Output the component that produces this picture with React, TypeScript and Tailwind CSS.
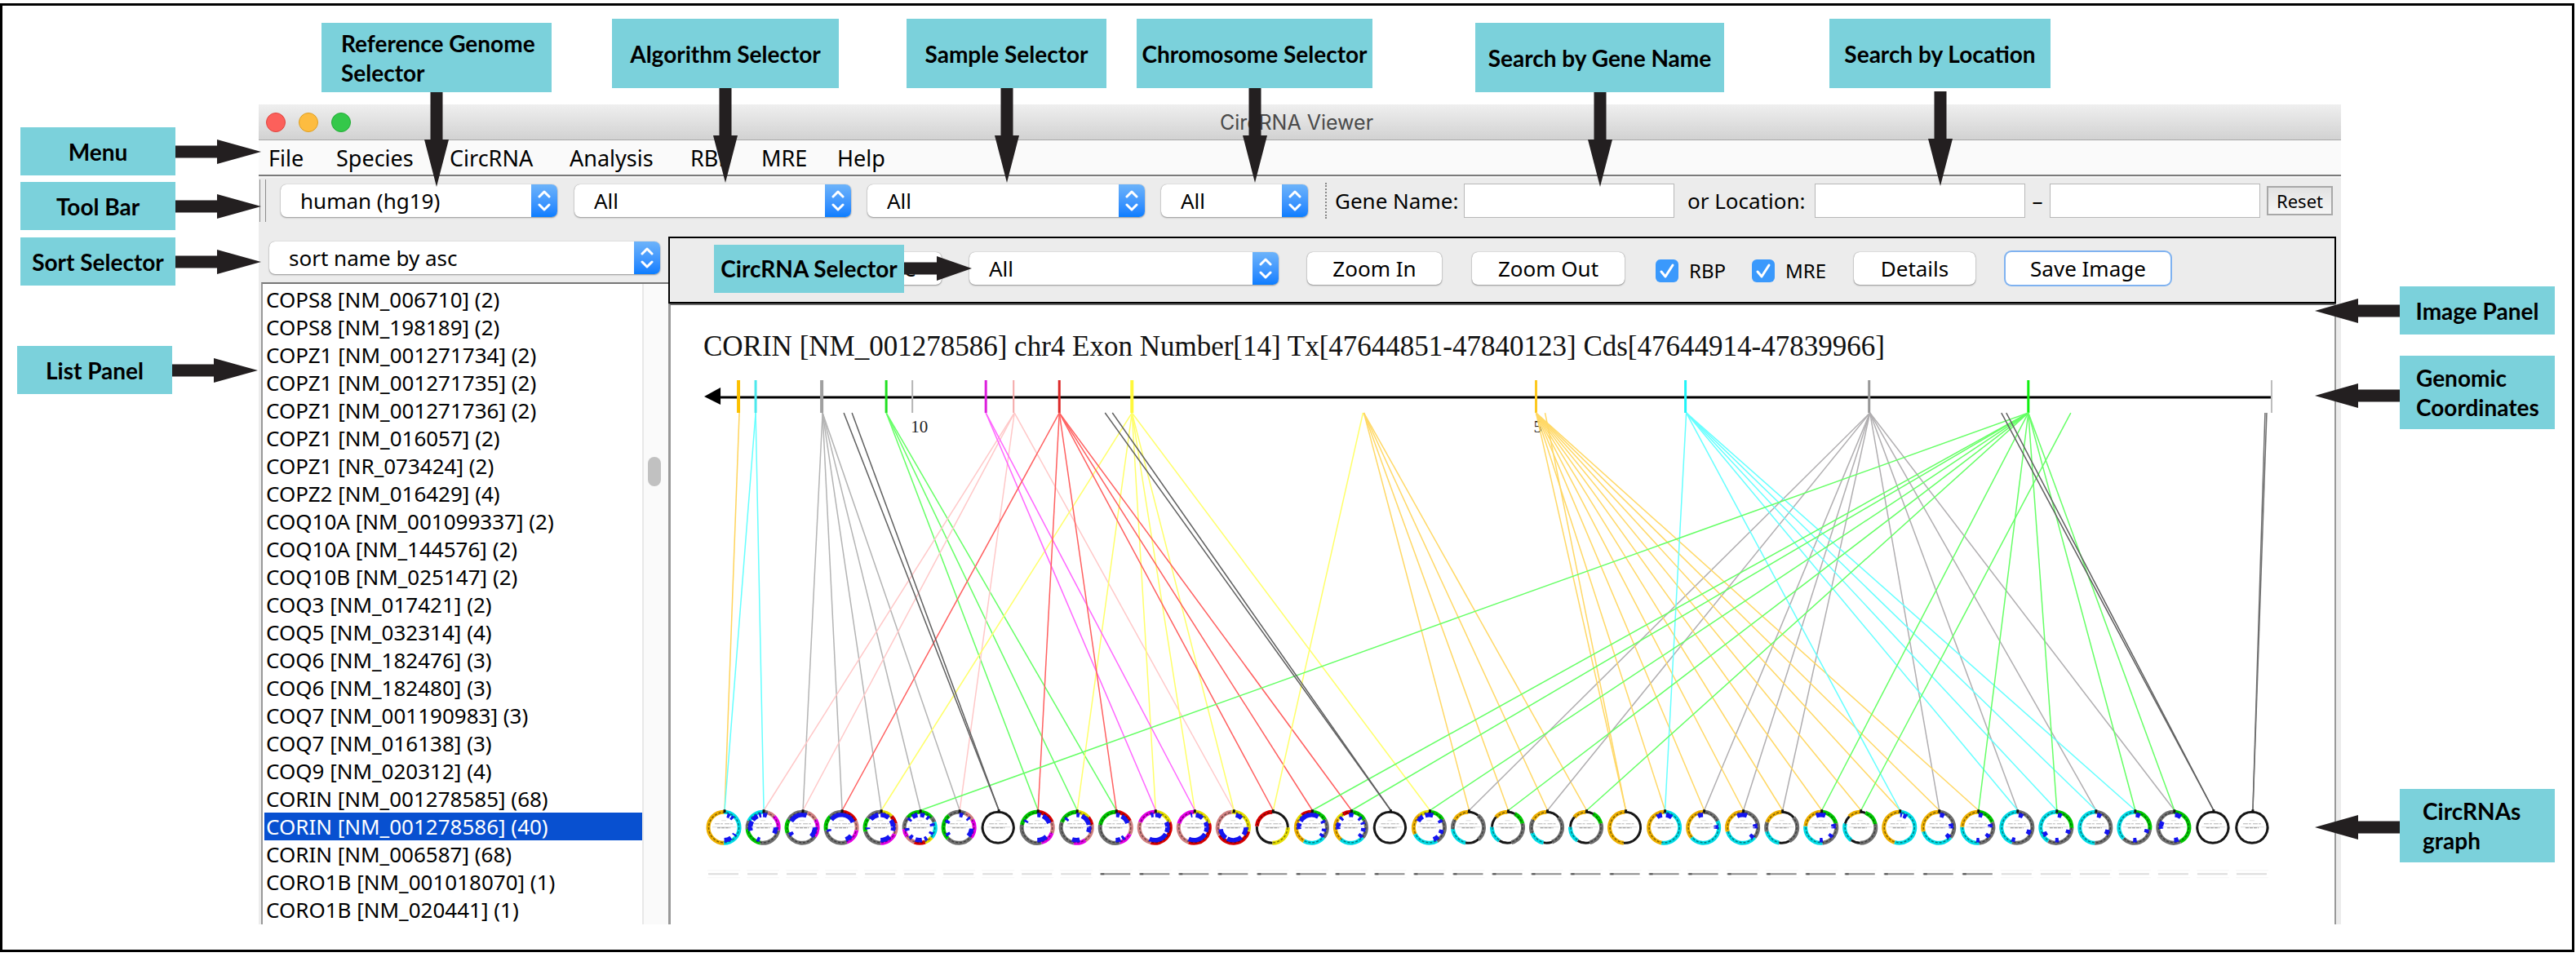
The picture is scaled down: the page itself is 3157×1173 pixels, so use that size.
import React from "react";
import clsx from "clsx";

const INK = "#231f20";

/* ---------- Callout arrows ---------- */

function DownArrow({ className }: { className?: string }) {
  return (
    <svg width="30" height="116" viewBox="0 0 30 116" className={clsx("absolute left-1/2 -translate-x-1/2", className)} aria-hidden="true">
      <path d="M7.500 0H22.500V58H30L15 116L0 58H7.500Z" fill={INK} />
    </svg>
  );
}

function RightArrow({ short }: { short?: boolean }) {
  const w = short ? 83 : 105;
  const s = short ? 40 : 51;
  return (
    <svg width={w} height="30" viewBox={`0 0 ${w} 30`} className="absolute left-full top-1/2 -translate-y-1/2" aria-hidden="true">
      <path d={`M0 7.500H${s}V0L${w} 15L${s} 30V22.500H0Z`} fill={INK} />
    </svg>
  );
}

function LeftArrow({ className }: { className?: string }) {
  return (
    <svg width="104" height="30" viewBox="0 0 104 30" className={clsx("absolute right-full top-1/2 -translate-y-1/2", className)} aria-hidden="true">
      <path d="M104 7.500H53V0L0 15L53 30V22.500H104Z" fill={INK} />
    </svg>
  );
}

function Callout({ className, children, arrow }: { className: string; children: React.ReactNode; arrow: React.ReactNode }) {
  return (
    <div className={clsx("relative z-20 flex shrink-0 items-center bg-[#7bd1db] font-[Lato,sans-serif] text-[28px] leading-[36px] font-bold whitespace-nowrap text-black", className)}>
      {children}
      {arrow}
    </div>
  );
}

/* ---------- Controls ---------- */

function Combo({ label, value, className, pad = "pl-6" }: { label: string; value: string; className: string; pad?: string }) {
  return (
    <div className={clsx("relative h-10 shrink-0 overflow-hidden rounded-[7px] bg-white shadow-[0_1px_2px_rgba(0,0,0,0.35),0_0_1px_rgba(0,0,0,0.4)]", className)}>
      <select aria-label={label} className={clsx("h-full w-full appearance-none bg-transparent pr-9 text-[26px] leading-10 text-black", pad)}>
        <option>{value}</option>
      </select>
      <span className="pointer-events-none absolute inset-y-0 right-0 flex w-8 items-center justify-center bg-linear-to-b from-[#6cb3fa] to-[#087dff]">
        <svg width="20" height="26" viewBox="0 0 20 26" fill="none" stroke="white" strokeWidth="3" strokeLinecap="round" strokeLinejoin="round" aria-hidden="true">
          <path d="M4 8L10 2L16 8M4 18L10 24L16 18" />
        </svg>
      </span>
    </div>
  );
}

function PushButton({ children, className }: { children: React.ReactNode; className: string }) {
  return (
    <button type="button" className={clsx("h-10 shrink-0 rounded-[7px] bg-white text-[26px] leading-10 whitespace-nowrap text-black", className)}>
      {children}
    </button>
  );
}

const PLAIN = "shadow-[0_1px_2px_rgba(0,0,0,0.35),0_0_1px_rgba(0,0,0,0.5)]";

function Tick({ id, label, className, textClass }: { id: string; label: string; className: string; textClass: string }) {
  return (
    <div className={clsx("relative flex shrink-0 items-center gap-[13px] pt-1.5", className)}>
      <input id={id} type="checkbox" defaultChecked className="h-7 w-7 appearance-none rounded-md bg-[#3a99fc]" />
      <svg width="28" height="28" viewBox="0 0 28 28" className="pointer-events-none absolute left-0" fill="none" stroke="white" strokeWidth="3" strokeLinecap="round" strokeLinejoin="round" aria-hidden="true">
        <path d="M7 15L12 21L21 7" />
      </svg>
      <label htmlFor={id} className={clsx("text-[24px] leading-7", textClass)}>{label}</label>
    </div>
  );
}

function TextBox({ label, id, className }: { label?: string; id: string; className: string }) {
  return <input id={id} aria-label={label} type="text" className={clsx("h-[42px] w-[258px] shrink-0 border border-[#b8b8b8] bg-white px-2 text-[26px]", className)} />;
}

/* ---------- Data ---------- */

const MENUS: [string, string][] = [
  ["File", "w-[83px]"],
  ["Species", "w-[139px]"],
  ["CircRNA", "w-[147px]"],
  ["Analysis", "w-[148px]"],
  ["RBP", "w-[87px]"],
  ["MRE", "w-[93px]"],
  ["Help", "w-[80px]"],
];

const GENES = [
  "COPS8 [NM_006710] (2)",
  "COPS8 [NM_198189] (2)",
  "COPZ1 [NM_001271734] (2)",
  "COPZ1 [NM_001271735] (2)",
  "COPZ1 [NM_001271736] (2)",
  "COPZ1 [NM_016057] (2)",
  "COPZ1 [NR_073424] (2)",
  "COPZ2 [NM_016429] (4)",
  "COQ10A [NM_001099337] (2)",
  "COQ10A [NM_144576] (2)",
  "COQ10B [NM_025147] (2)",
  "COQ3 [NM_017421] (2)",
  "COQ5 [NM_032314] (4)",
  "COQ6 [NM_182476] (3)",
  "COQ6 [NM_182480] (3)",
  "COQ7 [NM_001190983] (3)",
  "COQ7 [NM_016138] (3)",
  "COQ9 [NM_020312] (4)",
  "CORIN [NM_001278585] (68)",
  "CORIN [NM_001278586] (40)",
  "CORIN [NM_006587] (68)",
  "CORO1B [NM_001018070] (1)",
  "CORO1B [NM_020441] (1)",
];
const SELECTED = 19;

const COLORS: Record<string, string> = {
  O: "#eeb000",
  C: "#00dce6",
  G: "#00c800",
  M: "#e400e4",
  P: "#d08080",
  R: "#d80000",
  Y: "#e6de00",
  K: "#1c1c1c",
  A: "#707070",
};

/* Ring segments run clockwise from the top: colour and end angle. Marks are start-end angles. */
type Ring = { seg: string; marks?: [number, number][] };
const RINGS: Ring[] = [
  { seg: "C180 O360", marks: [[15, 28], [34, 46], [120, 128], [145, 178]] },
  { seg: "A18 P45 M100 A190 G265 A295 C360", marks: [[0, 18], [88, 118], [194, 208], [255, 300], [306, 335], [342, 352]] },
  { seg: "A20 P60 M125 A250 G300 A360", marks: [[300, 380], [88, 135], [232, 248]] },
  { seg: "R65 P100 M160 A260 G315 A360", marks: [[308, 426], [130, 160], [252, 262]] },
  { seg: "Y45 R75 P115 M180 A255 G305 A360", marks: [[310, 350], [0, 40], [55, 105], [135, 180], [262, 270]] },
  { seg: "G50 A70 C130 Y160 R200 P235 M265 A310 G360", marks: [[325, 350], [2, 22], [34, 46], [72, 84], [110, 122], [145, 158], [170, 200], [215, 230], [255, 268], [302, 314]] },
  { seg: "A25 P60 M130 A225 G320 A360", marks: [[2, 18], [42, 52], [95, 132], [232, 246], [290, 304]] },
  { seg: "K360" },
  { seg: "R70 P110 M165 A280 G360", marks: [[0, 16], [26, 70], [135, 180], [294, 304]] },
  { seg: "Y50 R80 P145 M190 A290 G360", marks: [[0, 14], [25, 78], [84, 112], [165, 200], [305, 316]] },
  { seg: "R65 P115 M165 A280 G360", marks: [[2, 18], [28, 70], [138, 150], [158, 180]] },
  { seg: "Y70 R195 P290 M360", marks: [[342, 354], [2, 30], [65, 112], [120, 205]] },
  { seg: "Y75 R200 P285 M360", marks: [[345, 352], [8, 42], [65, 110], [120, 205]] },
  { seg: "Y105 R240 P355 Y360", marks: [[12, 42], [88, 125], [140, 208], [215, 262]] },
  { seg: "K90 Y180 K275 R360" },
  { seg: "G60 A130 C210 O300 Y322 R360", marks: [[262, 290], [300, 392], [58, 70], [95, 108], [120, 134]] },
  { seg: "G60 A130 C220 O305 Y330 R360", marks: [[352, 372], [40, 52], [66, 76], [92, 108], [122, 138], [262, 292], [308, 320]] },
  { seg: "K360" },
  { seg: "G60 A150 C245 O325 Y360", marks: [[300, 330], [342, 378], [54, 68], [100, 118], [135, 160]] },
  { seg: "K40 A140 K190 C265 A300 O360" },
  { seg: "K28 G75 A165 K212 C272 K312 O360" },
  { seg: "K50 A160 K192 C250 A300 O360" },
  { seg: "K28 G75 A165 K212 C272 K312 O360" },
  { seg: "K185 O360" },
  { seg: "C190 O360", marks: [[326, 350], [8, 36]] },
  { seg: "A65 C230 O360", marks: [[335, 358], [80, 96]] },
  { seg: "A130 C255 O360", marks: [[335, 380], [74, 94], [125, 142]] },
  { seg: "K50 A150 K190 C255 A290 O360" },
  { seg: "G75 A175 C275 O360", marks: [[338, 380], [74, 94], [122, 138], [172, 186]] },
  { seg: "K20 G78 A180 K215 C285 K315 O360" },
  { seg: "C198 O360", marks: [[4, 12], [18, 34]] },
  { seg: "A130 C255 O360", marks: [[6, 26], [72, 94], [122, 142]] },
  { seg: "G70 A175 C272 O360", marks: [[4, 22], [74, 90], [120, 138], [172, 186]] },
  { seg: "A198 C360", marks: [[8, 28], [100, 122], [188, 204]] },
  { seg: "G92 A210 C360", marks: [[8, 26], [100, 118], [168, 184], [230, 250]] },
  { seg: "A182 C360", marks: [[8, 28], [100, 122]] },
  { seg: "G98 A225 C360", marks: [[6, 26], [98, 114], [170, 186]] },
  { seg: "G155 A360", marks: [[6, 34], [158, 178], [264, 298]] },
  { seg: "K360" },
  { seg: "K360" },
];

const RING_Y = 1014;
const ringX = (i: number) => 888 + 48 * i;

/* Fans: colour, source x, circle indices. */
const FANS: [string, number, number[]][] = [
  ["#ffd45c", 907, [0]],
  ["#66ffff", 927, [0, 1]],
  ["#b4b4b4", 1009, [2, 3, 4, 5, 6]],
  ["#66ff66", 1087, [8, 9, 10]],
  ["#ffc8c8", 1244, [1, 2, 6, 13]],
  ["#ffff6a", 1388, [4, 9, 11, 12, 13, 18]],
  ["#ff66ff", 1209, [11, 12]],
  ["#ff6060", 1299, [3, 8, 10, 14, 15, 16]],
  ["#ffff6a", 1671, [14]],
  ["#ffd866", 1672, [19, 20, 21, 22]],
  ["#b0aeb0", 2292, [19, 21, 25, 26, 27, 31, 33, 35, 37]],
  ["#ffd866", 1883, [23, 24, 25, 26, 27, 28, 29, 30, 31, 32]],
  ["#ffd866", 1894, [23]],
  ["#66ffff", 2067, [24, 30, 33, 34, 35, 36]],
  ["#66ff66", 2486, [5, 15, 16, 18, 20, 22, 28, 32, 34, 36, 37]],
  ["#66ff66", 2538, [29]],
  ["#606060", 1035, [7]],
  ["#606060", 1045, [7]],
  ["#606060", 1355, [17]],
  ["#606060", 1364, [17]],
  ["#606060", 2453, [38]],
  ["#606060", 2459, [38]],
  ["#707070", 2776, [39]],
  ["#707070", 2778, [39]],
];

/* Exon ticks on the axis: x, width, colour. */
const TICKS: [number, number, string][] = [
  [906, 4, "#fcc000"],
  [927, 3, "#4de8ec"],
  [1008, 4, "#a0a0a0"],
  [1087, 3, "#20e020"],
  [1119, 2, "#b4b4b4"],
  [1209, 3, "#dc20dc"],
  [1243, 2, "#f4a8a8"],
  [1299, 3, "#dc2828"],
  [1388, 4, "#fff83c"],
  [1883, 3, "#fcc820"],
  [2066, 3, "#20f4f8"],
  [2291, 3, "#989898"],
  [2486, 3, "#10f010"],
  [2784, 2, "#bcbcbc"],
];

function arc(cx: number, cy: number, r: number, from: number, to: number) {
  const end = to - from >= 360 ? from + 359.9 : to;
  const p = (a: number) => {
    const t = ((a - 90) * Math.PI) / 180;
    return `${(cx + r * Math.cos(t)).toFixed(2)} ${(cy + r * Math.sin(t)).toFixed(2)}`;
  };
  return `M${p(from)}A${r} ${r} 0 ${end - from > 180 ? 1 : 0} 1 ${p(end)}`;
}

function CircRna({ index, ring }: { index: number; ring: Ring }) {
  const cx = ringX(index);
  let at = 0;
  const segs = ring.seg.split(" ").map((s) => {
    const from = at;
    at = Number(s.slice(1));
    return { key: s[0], from, to: at };
  });
  const bar = index < 10 || index > 32 ? "#dcdcdc" : "#8c8c8c";
  return (
    <g fill="none">
      {segs.map((s) => (
        <path key={s.to} d={arc(cx, RING_Y, 19, s.from, s.to)} stroke={COLORS[s.key]} strokeWidth={s.key === "K" ? 3 : 5} />
      ))}
      <circle cx={cx} cy={RING_Y} r="18.500" stroke="#000" strokeWidth="1.500" strokeDasharray="3 2" opacity="0.45" />
      {ring.marks?.map(([a, b]) => (
        <path key={a} d={arc(cx, RING_Y, 15.5, a, b)} stroke="#1414f0" strokeWidth="5.500" />
      ))}
      <path d={`M${cx + 1} ${RING_Y - 22}v4`} stroke="#111" strokeWidth="3" />
      <g stroke="#b4b4b4" strokeWidth="1">
        <path d={`M${cx - 3} ${RING_Y - 8.5}h6`} stroke="#dcdcdc" />
        <path d={`M${cx - 11} ${RING_Y - 4.5}h22`} strokeDasharray="6 1 3 2" />
        <path d={`M${cx - 14} ${RING_Y - 0.5}h29`} stroke="#dcdcdc" />
        <path d={`M${cx - 8} ${RING_Y + 0.5}h16`} stroke="#8c8c8c" strokeDasharray="4 1" />
      </g>
      <path d={`M${cx - 19} 1071h37`} stroke={bar} strokeWidth="2" />
      {index > 9 && index < 33 && <path d={`M${cx - 18} 1071h4`} stroke="#555" strokeWidth="2" />}
      <path d={`M${cx - 20} 1066.500h40M${cx - 20} 1075.500h40`} stroke="#f6f6f6" />
    </g>
  );
}

function GenomeChart() {
  return (
    <svg viewBox="823 445 2038 688" className="block h-auto w-full" role="img" aria-label="CircRNAs along the genomic coordinates">
      <path d="M884 487H2783" stroke="#000" strokeWidth="3" />
      <path d="M864 486L884 475V496Z" fill="#000" />
      {TICKS.map(([x, w, c]) => (
        <path key={x} d={`M${x} 466V506`} stroke={c} strokeWidth={w} />
      ))}
      <g fontFamily="Liberation Serif, serif" fontSize="21" fill="#222">
        <text x="1117" y="530">10</text>
        <text x="1880" y="530">5</text>
      </g>
      <g strokeWidth="1.500">
        {FANS.map(([c, x, ends]) => ends.map((i) => <line key={`${x}-${i}`} x1={x} y1={506} x2={ringX(i) + 1} y2={993} stroke={c} />))}
      </g>
      {RINGS.map((ring, i) => (
        <CircRna key={i} index={i} ring={ring} />
      ))}
    </svg>
  );
}

/* ---------- Window ---------- */

function AppWindow() {
  return (
    <section className="flex min-w-0 flex-1 flex-col bg-[#ececec]">
      <header className="relative flex h-11 items-center justify-center border-b border-[#a8a8a8] bg-linear-to-b from-[#efefef] to-[#d2d2d2] pr-2">
        <div className="absolute left-[9px] flex gap-4">
          <span className="h-6 w-6 rounded-full border border-[#e0443e] bg-[#fc605b]" />
          <span className="h-6 w-6 rounded-full border border-[#dfa023] bg-[#fdbc40]" />
          <span className="h-6 w-6 rounded-full border border-[#24ad37] bg-[#34c84a]" />
        </div>
        <h1 className="font-[Inter,sans-serif] text-[25px] leading-8 text-[#4a4a4a]">CircRNA Viewer</h1>
      </header>

      <nav className="flex h-[44px] items-center border-b-2 border-[#7b7b7b] bg-[#fafafa] pt-0.5 pl-3">
        {MENUS.map(([name, width]) => (
          <button key={name} type="button" className={clsx("shrink-0 text-left text-[27px] leading-9", width)}>{name}</button>
        ))}
      </nav>

      <div className="flex h-[74px] items-start border-t-2 border-[#f6f6f6]">
        <div className="flex h-14 items-center text-[26px] leading-10 whitespace-nowrap">
          <span className="ml-px h-13 w-2 shrink-0 border-x border-[#8c8c8c]" />
          <Combo label="Reference genome" value="human (hg19)" className="ml-[18px] w-[339px]" />
          <Combo label="Algorithm" value="All" className="ml-[21px] w-[339px]" />
          <Combo label="Sample" value="All" className="ml-5 w-[340px]" />
          <Combo label="Chromosome" value="All" className="ml-5 w-[180px]" />
          <span className="ml-[21px] h-11 shrink-0 border-l-2 border-dotted border-[#888]" />
          <label htmlFor="gene" className="ml-2.5 w-[151px] shrink-0">Gene Name:</label>
          <TextBox id="gene" className="ml-[7px]" />
          <label htmlFor="from" className="ml-4 w-[148px] shrink-0">or Location:</label>
          <TextBox id="from" className="ml-2" />
          <span className="w-[30px] shrink-0 text-center">–</span>
          <TextBox id="to" label="Location end" className="" />
          <button type="button" className="ml-2 h-9 w-[81px] shrink-0 border-2 border-[#a8a8a8] bg-linear-to-b from-[#e2e2e2] to-[#f6f6f6] text-[22px] leading-8">Reset</button>
        </div>
      </div>

      <div className="flex flex-1">
        <aside className="flex w-[502px] shrink-0 flex-col pt-1.5">
          <Combo label="Sort order" value="sort name by asc" className="ml-[13px] w-[479px]" />
          <div className="mt-2.5 ml-[3px] flex flex-1 border-t-2 border-l-2 border-t-[#777] border-l-[#999] bg-white">
            <ul className="flex-1 pt-0.5 pl-0.5 text-[26px] leading-[34px] whitespace-nowrap">
              {GENES.map((g, i) => (
                <li key={g} className={clsx("pl-0.5", i === SELECTED && "bg-[#0850d0] text-white")}>{g}</li>
              ))}
            </ul>
            <div className="w-8 shrink-0 border-l-2 border-[#e8e8e8] bg-[#fafafa] pl-[5px]">
              <div className="mt-[212px] h-9 w-4 rounded-full bg-[#c1c1c1]" />
            </div>
          </div>
        </aside>

        <main className="flex min-w-0 flex-1 flex-col">
          <div className="flex h-[82px] shrink-0 items-center border-2 border-black pb-1">
            <Callout className="ml-[54px] h-[59px] w-[233px] justify-center" arrow={<RightArrow short />}>CircRNA Selector</Callout>
            <PushButton className={clsx("-ml-[60px] w-[106px] pr-[31px] text-right", PLAIN)}>e</PushButton>
            <Combo label="CircRNA" value="All" className="ml-[34px] w-[379px]" />
            <PushButton className={clsx("ml-[35px] w-[165px]", PLAIN)}>Zoom In</PushButton>
            <PushButton className={clsx("ml-[37px] w-[187px]", PLAIN)}>Zoom Out</PushButton>
            <Tick id="rbp" label="RBP" className="ml-[38px]" textClass="w-[42px]" />
            <Tick id="mre" label="MRE" className="ml-[35px]" textClass="w-[50px]" />
            <PushButton className={clsx("ml-[34px] w-[149px]", PLAIN)}>Details</PushButton>
            <PushButton className="ml-[37px] w-[202px] shadow-[0_0_0_2px_#7fb2f0]">Save Image</PushButton>
          </div>
          <div className="flex-1 border-t-2 border-r-2 border-l-3 border-t-[#666] border-r-[#999] border-l-[#999] bg-white">
            <h2 className="pt-[31px] pl-10 font-['Liberation_Serif',serif] text-[35px] leading-10 whitespace-nowrap text-[#111]">
              CORIN [NM_001278586] chr4 Exon Number[14] Tx[47644851-47840123] Cds[47644914-47839966]
            </h2>
            <GenomeChart />
          </div>
        </main>
        <div className="w-1.5 shrink-0" />
      </div>
    </section>
  );
}

export default function App() {
  return (
    <div className="bg-white pt-1 pr-0.5 font-['Noto_Sans',sans-serif] text-black">
      <div className="border-3 border-black pb-[31px]">
        <div className="flex h-[121px] items-start pl-[391px]">
          <Callout className="mt-[21px] h-[85px] w-[282px] pl-6" arrow={<DownArrow className="top-full" />}>
            <span>Reference Genome<br />Selector</span>
          </Callout>
          <Callout className="mt-4 ml-[74px] h-[85px] w-[278px] justify-center" arrow={<DownArrow className="top-full" />}>Algorithm Selector</Callout>
          <Callout className="mt-4 ml-[83px] h-[85px] w-[245px] justify-center" arrow={<DownArrow className="top-full" />}>Sample Selector</Callout>
          <Callout className="mt-4 ml-[37px] h-[85px] w-[289px] justify-center" arrow={<DownArrow className="top-full" />}>Chromosome Selector</Callout>
          <Callout className="mt-[21px] ml-[126px] h-[85px] w-[305px] justify-center" arrow={<DownArrow className="top-full" />}>Search by Gene Name</Callout>
          <Callout className="mt-4 ml-[129px] h-[85px] w-[271px] justify-center" arrow={<DownArrow className="top-[89px]" />}>Search by Location</Callout>
        </div>

        <div className="flex">
          <div className="flex w-[314px] shrink-0 flex-col pt-7 pl-[22px]">
            <Callout className="h-[59px] w-[190px] justify-center" arrow={<RightArrow />}>Menu</Callout>
            <Callout className="mt-2 h-[59px] w-[190px] justify-center" arrow={<RightArrow />}>Tool Bar</Callout>
            <Callout className="mt-[9px] h-[59px] w-[190px] justify-center" arrow={<RightArrow />}>Sort Selector</Callout>
            <Callout className="mt-[74px] -ml-1 h-[59px] w-[190px] justify-center" arrow={<RightArrow />}>List Panel</Callout>
          </div>
          <AppWindow />
          <div className="flex w-[283px] shrink-0 flex-col pt-[223px] pl-[72px]">
            <Callout className="h-[59px] w-[190px] justify-center" arrow={<LeftArrow />}>Image Panel</Callout>
            <Callout className="mt-[26px] h-[90px] w-[190px] pl-5" arrow={<LeftArrow className="mt-1" />}>
              <span>Genomic<br />Coordinates</span>
            </Callout>
            <Callout className="mt-[441px] h-[90px] w-[190px] pl-7" arrow={<LeftArrow className="mt-0.5" />}>
              <span>CircRNAs<br />graph</span>
            </Callout>
          </div>
        </div>
      </div>
    </div>
  );
}
